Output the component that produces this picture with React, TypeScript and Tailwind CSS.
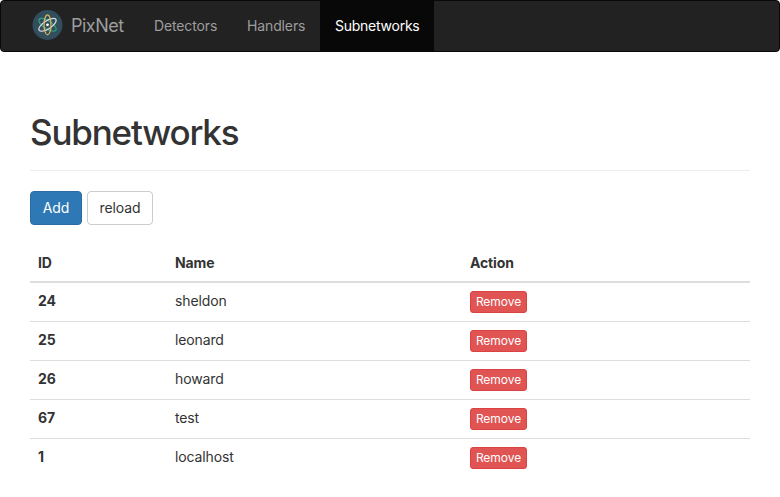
const networks = [
  { id: 24, name: 'sheldon' },
  { id: 25, name: 'leonard' },
  { id: 26, name: 'howard' },
  { id: 67, name: 'test' },
  { id: 1, name: 'localhost' },
];

function Logo() {
  return (
    <svg className="mb-0.5 h-[30px] w-[31px] shrink-0" viewBox="0 0 31 30" fill="none">
      <circle cx="15.5" cy="15" r="15" fill="#324d5b" />
      <ellipse cx="15.5" cy="14.8" rx="4" ry="10" stroke="#2fa183" strokeWidth="1.2" transform="rotate(-57 15.5 14.8)" />
      <ellipse cx="15.5" cy="14.8" rx="4" ry="10" stroke="#d5dde0" strokeWidth="1.2" transform="rotate(57 15.5 14.8)" />
      <ellipse cx="15.5" cy="14.8" rx="3.5" ry="10" stroke="#e0b95c" strokeWidth="1.2" />
      <circle cx="15.5" cy="14.8" r="1.4" fill="#fff" />
    </svg>
  );
}

export default function App() {
  return (
    <div className="h-[497px] overflow-hidden bg-white font-['Inter',sans-serif] text-[14px] leading-5 tracking-[-0.13px] text-[#333]">
      <nav className="flex h-[52px] rounded border border-[#080808] bg-[#222] pl-[31px] text-[#9d9d9d]">
        <a className="flex w-[107px] items-center gap-2 text-[18px]">
          <Logo />
          <span className="tracking-[-0.5px]">PixNet</span>
        </a>
        <a className="flex w-[93px] items-center pl-[15px]">Detectors</a>
        <a className="flex w-[88px] items-center pl-[15px]">Handlers</a>
        <a className="flex w-[114px] items-center bg-[#080808] pl-[15px] tracking-[-0.25px] text-white">Subnetworks</a>
      </nav>

      <main className="px-[30px] pt-[60px]">
        <header className="h-[59px] border-b border-[#eee]">
          <h1 className="text-[35px] font-medium leading-10 tracking-[-1.2px]">Subnetworks</h1>
        </header>

        <div className="mt-5 flex gap-[5px]">
          <button className="h-[34px] w-[52px] rounded border border-[#2a6ca4] bg-[#2e79b5] text-white">Add</button>
          <button className="h-[34px] w-[66px] rounded border border-[#ccc] bg-white">reload</button>
        </div>

        <table className="mt-5 w-full table-fixed border-separate border-spacing-0 text-left">
          <colgroup>
            <col className="w-[137px]" />
            <col className="w-[295px]" />
            <col />
          </colgroup>
          <thead>
            <tr>
              <th className="border-b-2 border-[#ddd] p-2 font-bold">ID</th>
              <th className="border-b-2 border-[#ddd] p-2 font-bold">Name</th>
              <th className="border-b-2 border-[#ddd] p-2 font-bold">Action</th>
            </tr>
          </thead>
          <tbody className="[&>tr:last-child>*]:border-b-0">
            {networks.map((n) => (
              <tr key={n.id} className="align-top">
                <th className="border-b border-[#ddd] p-2 font-bold">{n.id}</th>
                <td className="border-b border-[#ddd] p-2">{n.name}</td>
                <td className="border-b border-[#ddd] p-2">
                  <button className="block h-[22px] w-[57px] rounded-[3px] border border-[#dc4141] bg-[#e05454] text-[12px] leading-[18px] tracking-[-0.05px] text-white">
                    Remove
                  </button>
                </td>
              </tr>
            ))}
          </tbody>
        </table>
      </main>
    </div>
  );
}
